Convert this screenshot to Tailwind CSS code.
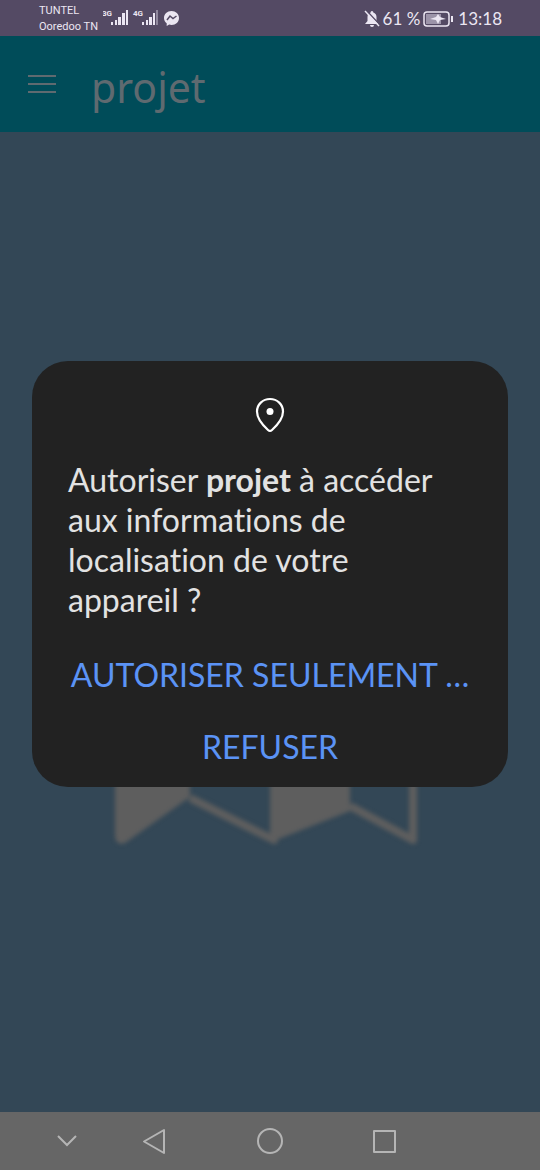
<!DOCTYPE html>
<html lang="fr">
<head>
<meta charset="utf-8">
<meta name="viewport" content="width=device-width, initial-scale=1">
<title>projet</title>
<script src="https://cdn.jsdelivr.net/npm/@tailwindcss/browser@4"></script>
</head>
<body class="flex min-h-screen flex-col bg-[#334756] font-['Lato','Noto_Sans',sans-serif]">
  <!-- Status bar -->
  <div class="flex h-9 items-center justify-between bg-[#544a64] pr-[38px] pl-[39px] text-[#ebe6f2]">
    <div class="flex items-center">
      <div class="w-16 pt-[2px] font-['Roboto',sans-serif] text-[11px] leading-4 whitespace-nowrap"><p>TUNTEL</p><p>Ooredoo TN</p></div>
      <svg class="h-5 w-[86px]" viewBox="0 0 86 20" fill="currentColor" aria-hidden="true">
        <text x="-1" y="8" font-family="Roboto" font-weight="700" font-size="8">3G</text>
        <path d="M8 14h2v3H8zM12 12h2v5h-2zM15 9h3v8h-3zM19 5h3v12h-3zM23 2h2v15h-2z"/>
        <text x="30" y="8" font-family="Roboto" font-weight="700" font-size="8">4G</text>
        <path d="M39 14h2v3h-2zM43 12h2v5h-2zM46 9h3v8h-3zM50 5h2v12h-2z"/><path opacity=".4" d="M53 2h2v15h-2z"/>
        <path d="M68.500 3c-4.300 0-7.500 3-7.500 6.900 0 2.200 1 4.100 2.700 5.400V18l2.500-1.400c.7.200 1.500.3 2.300.3 4.300 0 7.500-3 7.500-7S72.800 3 68.500 3z"/>
        <path d="m64 12 3-4 3 2.500L73.500 8" fill="none" stroke="#544a64" stroke-width="1.500"/>
      </svg>
    </div>
    <div class="flex items-center gap-[3px] pt-[2px] text-[17px]">
      <svg class="h-[18px] w-4" viewBox="0 0 16 18" aria-hidden="true">
        <path fill="currentColor" d="M8 1c-1 0-1.300.8-1.300 1.500C4.500 3 3.500 5 3.500 7v4L1 14h14l-2.500-3V7c0-2-1-4-3.200-4.500C9.300 1.800 9 1 8 1zM6 15a2 2 0 0 0 4 0z"/>
        <path d="m2 0 14 15" stroke="#544a64" stroke-width="1.500"/><path d="m1 1 14 15" stroke="currentColor" stroke-width="1.500"/>
      </svg>
      <span>61 %</span>
      <svg class="h-4 w-[30px]" viewBox="0 0 30 16" aria-hidden="true">
        <rect x="1" y="1" width="25" height="14" rx="3" fill="none" stroke="currentColor" stroke-width="1.500"/>
        <rect x="3" y="3" width="15" height="10" fill="#9c94a9"/>
        <path fill="currentColor" d="m15 3-2 3-6 2 6 1 2 4 2-4 6-1-6-2zM28 5h2v6h-2z"/>
      </svg>
      <span class="pl-[2px]">13:18</span>
    </div>
  </div>

  <div class="relative flex grow flex-col">
    <header class="flex h-24 items-center bg-[#004c59] px-7 text-[#5f6a70]">
      <button type="button" aria-label="Menu" class="mr-[35px] block">
        <svg class="h-5 w-7" viewBox="0 0 28 20" fill="none" stroke="currentColor" stroke-width="2" aria-hidden="true"><path d="M0 2h28M0 10h28M0 18h28"/></svg>
      </button>
      <h1 class="pt-[6px] font-['Noto_Sans',sans-serif] text-[41px] leading-none">projet</h1>
    </header>

    <main class="flex grow items-center justify-center">
      <svg class="h-[450px] w-80 blur-[2px]" viewBox="0 0 320 450" fill="#5e5e5e" aria-hidden="true">
        <path d="M5 46 80 4v396L15 446Q5 449 5 438zM161 46 240 4v410l-79 31z"/>
        <path d="m80 8 84 38v397l-84-42m160-393 63 34v401l-63-34" fill="none" stroke="#5e5e5e" stroke-width="8" stroke-linejoin="round"/>
      </svg>
    </main>

    <div class="absolute inset-0 flex items-center justify-center px-8">
      <section role="dialog" aria-modal="true" aria-labelledby="permission-title" class="w-full max-w-lg rounded-[36px] bg-[#222222] px-9 pt-9 pb-1">
        <svg class="mx-auto h-9 w-8" viewBox="0 0 32 36" fill="none" aria-hidden="true">
          <path d="M16 2C8.700 2 3 7.500 3 14.500c0 6.500 5 13 11 18.500q2 1.800 4 0c6-5.500 11-12 11-18.500C29 7.500 23.300 2 16 2z" stroke="#fff" stroke-width="2.200"/>
          <circle cx="16" cy="14.500" r="3.500" fill="#fff"/>
        </svg>
        <p id="permission-title" class="mt-[27px] text-[32px] leading-10 text-[#e2e2e2] [font-variant-ligatures:none]">Autoriser <strong>projet</strong> à accéder<br>aux informations de<br>localisation de votre<br>appareil ?</p>
        <div class="mt-[19px] flex flex-col text-[32px] text-[#5b93f5]">
          <button type="button" class="h-[72px] whitespace-nowrap">AUTORISER SEULEMENT …</button>
          <button type="button" class="h-[72px]">REFUSER</button>
        </div>
      </section>
    </div>
  </div>

  <!-- System navigation -->
  <nav aria-label="Système" class="flex h-[58px] items-center bg-[#666666] pl-[52px] text-[#b5b5b5]">
    <button type="button" aria-label="Masquer" class="w-[30px]"><svg class="mx-auto h-7 w-7" viewBox="0 0 28 28" fill="none" stroke="currentColor" stroke-width="2" aria-hidden="true"><path d="m5 9 9 9 9-9"/></svg></button>
    <button type="button" aria-label="Retour" class="ml-[58px] w-7"><svg class="h-7 w-7" viewBox="0 0 28 28" fill="none" stroke="currentColor" stroke-width="2" stroke-linejoin="round" aria-hidden="true"><path d="M24 3v23L4 14.500z"/></svg></button>
    <button type="button" aria-label="Accueil" class="ml-[88px] w-7"><svg class="h-7 w-7" viewBox="0 0 28 28" fill="none" stroke="currentColor" stroke-width="2" aria-hidden="true"><circle cx="14" cy="14" r="12"/></svg></button>
    <button type="button" aria-label="Applications récentes" class="ml-[86px] w-7"><svg class="h-7 w-7" viewBox="0 0 28 28" fill="none" stroke="currentColor" stroke-width="2" stroke-linejoin="round" aria-hidden="true"><path d="M4 4h21v21H4z"/></svg></button>
  </nav>
</body>
</html>
